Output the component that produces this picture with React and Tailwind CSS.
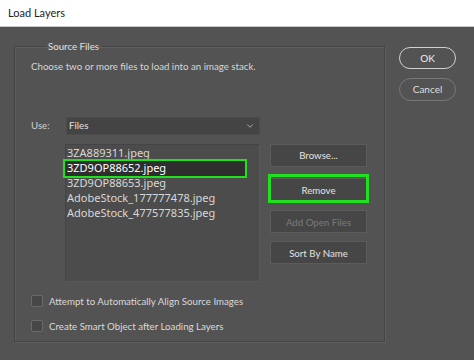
import { ChevronDown } from "lucide-react";

const files = [
  "3ZA889311.jpeg",
  "3ZD9OP88652.jpeg",
  "3ZD9OP88653.jpeg",
  "AdobeStock_177777478.jpeg",
  "AdobeStock_477577835.jpeg",
];

function SideButton({ children, disabled }) {
  return (
    <button
      className={`w-[97px] h-[23px] bg-[#464646] border border-[#5c5c5c] text-[9.7px] ${
        disabled ? "text-[#7a7a7a]" : "text-[#e2e2e2]"
      }`}
    >
      {children}
    </button>
  );
}

function Check({ label }) {
  return (
    <label className="flex items-center gap-[6px] h-[13px]">
      <span className="w-[12px] h-[12px] bg-[#474747] border border-[#6a6a6a] rounded-[2px]"></span>
      <span className="text-[9.7px] text-[#dadada]">{label}</span>
    </label>
  );
}

export default function App() {
  return (
    <div
      className="w-[474px] h-[360px] flex flex-col bg-[#535353] overflow-hidden"
      style={{ fontFamily: '"Lato", "Noto Sans", sans-serif' }}
    >
      <div className="h-[27px] bg-white flex items-center pl-[8px] border-b border-[#c8c8c8] shrink-0">
        <span className="text-[11px] text-[#222]">Load Layers</span>
      </div>

      <div className="flex flex-1 pl-[14px] pt-[15px]">
        <fieldset className="w-[371px] h-[300px] border border-[#444] shadow-[inset_1px_1px_0_#5e5e5e,1px_1px_0_#5e5e5e] pl-[16px]">
          <legend className="ml-[14px] px-[3px] text-[9.7px] text-[#e0e0e0] leading-none">
            Source Files
          </legend>
          <p className="mt-[7px] text-[9.7px] text-[#d6d6d6] leading-[14px]">
            Choose two or more files to load into an image stack.
          </p>

          <div className="flex items-center mt-[44px] h-[18px]">
            <span className="w-[35px] text-[9.7px] text-[#cfcfcf]">Use:</span>
            <div className="w-[194px] h-[18px] bg-[#444] border border-[#4c4c4c] flex items-center justify-between pl-[2px] pr-[4px]">
              <span className="text-[9.7px] text-[#e0e0e0]">Files</span>
              <ChevronDown size={10} className="text-[#bbb]" strokeWidth={2} />
            </div>
          </div>

          <div className="flex mt-[9px] ml-[34px] gap-[10px]">
            <div
              className="w-[195px] h-[138px] bg-[#4c4c4c] border border-[#444] border-r-[#5a5a5a] border-b-[#5a5a5a] pt-[1px]"
              style={{ fontFamily: '"Noto Sans", sans-serif' }}
            >
              {files.map((f, i) => (
                <div
                  key={f}
                  className={`h-[15px] flex items-center pl-[1px] text-[11px] ${
                    i === 1
                      ? "bg-[#2e2e2e] text-white w-[180px] -ml-[1px] pl-[2px] outline-2 outline-[#20e020]"
                      : "text-[#d8d8d8]"
                  }`}
                >
                  {f}
                </div>
              ))}
            </div>

            <div className="flex flex-col gap-[8px]">
              <SideButton>Browse...</SideButton>
              <div className="outline-[3px] outline-[#20e020] -outline-offset-1 mt-[1px] mb-[1px]">
                <SideButton>Remove</SideButton>
              </div>
              <SideButton disabled>Add Open Files</SideButton>
              <SideButton>Sort By Name</SideButton>
            </div>
          </div>

          <div className="flex flex-col gap-[12px] mt-[13px]">
            <Check label="Attempt to Automatically Align Source Images" />
            <Check label="Create Smart Object after Loading Layers" />
          </div>
        </fieldset>

        <div className="flex flex-col gap-[9px] ml-[14px] pt-[5px]">
          <button className="w-[57px] h-[22px] rounded-full border-[1.5px] border-[#d0d0d0] text-[10px] text-[#eee]">
            OK
          </button>
          <button className="w-[57px] h-[23px] rounded-full border border-[#777] text-[10px] text-[#ddd]">
            Cancel
          </button>
        </div>
      </div>
    </div>
  );
}
